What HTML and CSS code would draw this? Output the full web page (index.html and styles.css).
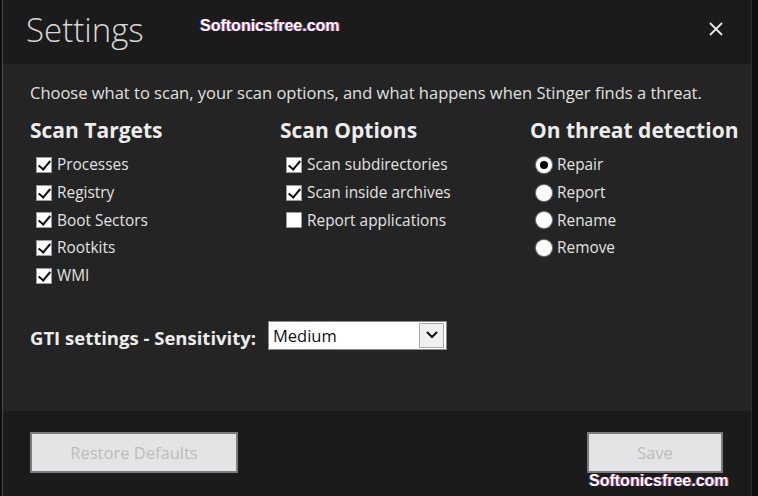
FILE: index.html
```html
<!DOCTYPE html>
<html>
<head>
    <title>Settings</title>
    <link rel="stylesheet" href="styles.css">
</head>
<body>
    <div class="window">
        <div class="title-bar">
            <span class="title">Settings</span>
            <span class="watermark top-mark">Softonicsfree.com</span>
            <span class="close">
                <svg width="14" height="14" viewBox="0 0 14 14"><path d="M1 1 L13 13 M13 1 L1 13" stroke="#e6e6e6" stroke-width="1.8"/></svg>
            </span>
        </div>

        <div class="content">
            <p class="intro">Choose what to scan, your scan options, and what happens when Stinger finds a threat.</p>

            <div class="columns">
                <div class="column">
                    <h2>Scan Targets</h2>
                    <div class="option"><span class="check on"></span>Processes</div>
                    <div class="option"><span class="check on"></span>Registry</div>
                    <div class="option"><span class="check on"></span>Boot Sectors</div>
                    <div class="option"><span class="check on"></span>Rootkits</div>
                    <div class="option"><span class="check on"></span>WMI</div>
                </div>
                <div class="column">
                    <h2>Scan Options</h2>
                    <div class="option"><span class="check on"></span>Scan subdirectories</div>
                    <div class="option"><span class="check on"></span>Scan inside archives</div>
                    <div class="option"><span class="check"></span>Report applications</div>
                </div>
                <div class="column">
                    <h2>On threat detection</h2>
                    <div class="option"><span class="radio on"></span>Repair</div>
                    <div class="option"><span class="radio"></span>Report</div>
                    <div class="option"><span class="radio"></span>Rename</div>
                    <div class="option"><span class="radio"></span>Remove</div>
                </div>
            </div>

            <div class="gti-row">
                <label class="gti-label">GTI settings - Sensitivity:</label>
                <div class="select">
                    <span class="select-value">Medium</span>
                    <span class="select-button">
                        <svg width="14" height="10" viewBox="0 0 14 10"><path d="M2 2 L7 7 L12 2" fill="none" stroke="#111" stroke-width="2"/></svg>
                    </span>
                </div>
            </div>
        </div>

        <div class="footer">
            <button class="btn restore">Restore Defaults</button>
            <div class="save-wrap">
                <button class="btn save">Save</button>
                <span class="watermark bottom-mark">Softonicsfree.com</span>
            </div>
        </div>
    </div>
</body>
</html>
```

FILE: styles.css
```css
* {
    box-sizing: border-box;
}

body {
    margin: 0;
    background-color: #0e0e0e;
    font-family: "Open Sans", "DejaVu Sans", sans-serif;
    color: #e2e2e2;
}

.window {
    width: 750px;
    height: 496px;
    margin-left: 2px;
    border-left: 1px solid #4a4a4a;
    border-right: 1px solid #2e2e2e;
    display: flex;
    flex-direction: column;
    background-color: #242424;
}

.title-bar {
    height: 64px;
    flex-shrink: 0;
    background-color: #1b1b1b;
    display: flex;
    align-items: center;
    padding-left: 23px;
    padding-right: 28px;
}

.title {
    font-size: 33px;
    font-weight: 300;
    color: #d8d8d8;
    margin-top: -6px;
    width: 174px;
}

.watermark {
    font-family: "Liberation Sans", Arial, sans-serif;
    font-weight: bold;
    font-size: 16px;
    color: #fff;
    white-space: nowrap;
    text-shadow: 1px 0 0 #c0202a, -1px 0 0 #2040c0;
}

.top-mark {
    margin-top: -12px;
}

.close {
    margin-left: auto;
    margin-top: -6px;
    display: flex;
}

.content {
    flex: 1;
    padding: 17px 0 0 27px;
}

.intro {
    margin: 0;
    font-size: 16.5px;
    color: #e0e0e0;
}

.columns {
    display: grid;
    grid-template-columns: 250px 250px auto;
    margin-top: 13px;
}

.column h2 {
    margin: 0 0 7px 0;
    font-size: 21px;
    font-weight: bold;
    color: #ececec;
    line-height: 27px;
}

.option {
    display: flex;
    align-items: center;
    height: 27.7px;
    font-size: 15.4px;
    color: #e2e2e2;
}

.check {
    width: 16px;
    height: 16px;
    margin: 0 5px 0 6px;
    border: 1px solid #9a9a9a;
    background-color: #fff;
    position: relative;
    flex-shrink: 0;
}

.check.on::after {
    content: "";
    position: absolute;
    left: 4px;
    top: 0px;
    width: 5px;
    height: 10px;
    border-right: 2.5px solid #111;
    border-bottom: 2.5px solid #111;
    transform: rotate(40deg);
}

.radio {
    width: 16px;
    height: 16px;
    margin: 0 5px 0 6px;
    border-radius: 50%;
    background-color: #fff;
    box-shadow: 0 0 1px 1px rgba(255, 255, 255, 0.4);
    display: flex;
    align-items: center;
    justify-content: center;
    flex-shrink: 0;
}

.radio.on::after {
    content: "";
    width: 8px;
    height: 8px;
    border-radius: 50%;
    background-color: #000;
}

.gti-row {
    display: flex;
    align-items: center;
    margin-top: 31px;
}

.gti-label {
    font-size: 18.5px;
    font-weight: bold;
    color: #ececec;
    margin-top: 5px;
    width: 238px;
    flex-shrink: 0;
}

.select {
    width: 179px;
    height: 29px;
    border: 1px solid #8a8a8a;
    background-color: #fff;
    display: flex;
    align-items: center;
}

.select-value {
    flex: 1;
    padding-left: 4px;
    color: #111;
    font-size: 16.5px;
}

.select-button {
    width: 25px;
    height: 25px;
    margin-right: 2px;
    border: 1px solid #aaa;
    background-color: #f0f0f0;
    display: flex;
    align-items: center;
    justify-content: center;
}

.footer {
    height: 85px;
    flex-shrink: 0;
    background-color: #1b1b1b;
    display: flex;
    align-items: flex-start;
    justify-content: space-between;
    padding: 21px 28px 0 27px;
}

.btn {
    height: 41px;
    background-color: #e4e4e6;
    border: 2px solid #7c7c7c;
    color: #bcbcbc;
    font-family: "Open Sans", "DejaVu Sans", sans-serif;
    font-size: 16.5px;
}

.restore {
    width: 208px;
}

.save-wrap {
    width: 136px;
    display: flex;
    flex-direction: column;
    align-items: flex-start;
}

.save {
    width: 136px;
}

.bottom-mark {
    margin-top: -1px;
    margin-left: 2px;
}
```
